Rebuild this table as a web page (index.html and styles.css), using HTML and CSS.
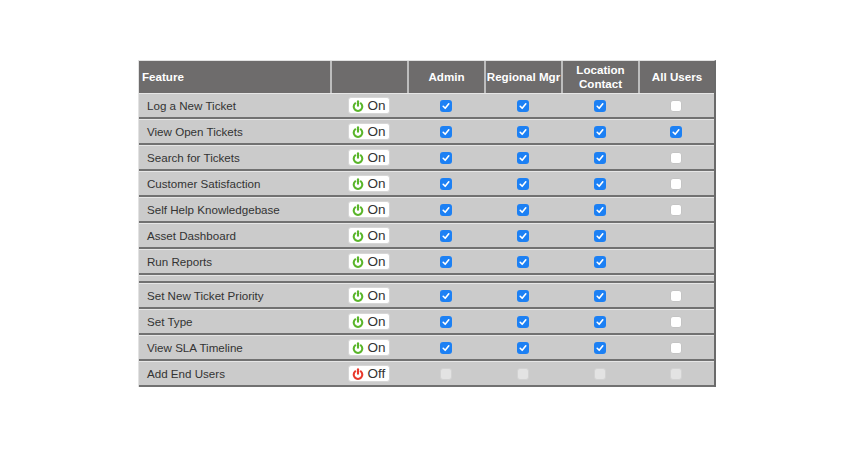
FILE: index.html
```html
<!DOCTYPE html>
<html>
<head>
<meta charset="utf-8">
<link rel="stylesheet" href="styles.css">
</head>
<body>
<table class="perm">
  <colgroup>
    <col class="c-feat"><col class="c-tog"><col class="c-role"><col class="c-role"><col class="c-role"><col class="c-last">
  </colgroup>
  <thead>
    <tr>
      <th class="th-feat"><div class="hc left">Feature</div></th>
      <th><div class="hc"></div></th>
      <th><div class="hc">Admin</div></th>
      <th><div class="hc">Regional Mgr</div></th>
      <th><div class="hc">Location<br>Contact</div></th>
      <th><div class="hc">All Users</div></th>
    </tr>
  </thead>
  <tbody id="body"></tbody>
</table>
<script src="app.js"></script>
</body>
</html>
```
FILE: app.js
```js
var rows = [
  ["Log a New Ticket", 1, "ccc", "u"],
  ["View Open Tickets", 1, "ccc", "c"],
  ["Search for Tickets", 1, "ccc", "u"],
  ["Customer Satisfaction", 1, "ccc", "u"],
  ["Self Help Knowledgebase", 1, "ccc", "u"],
  ["Asset Dashboard", 1, "ccc", ""],
  ["Run Reports", 1, "ccc", ""],
  null,
  ["Set New Ticket Priority", 1, "ccc", "u"],
  ["Set Type", 1, "ccc", "u"],
  ["View SLA Timeline", 1, "ccc", "u"],
  ["Add End Users", 0, "ddd", "d"]
];
var check = '<svg viewBox="0 0 12 12" width="12" height="12"><path d="M3.2 6.3 L5.2 8.3 L8.8 3.8" fill="none" stroke="#fff" stroke-width="1.6" stroke-linecap="round" stroke-linejoin="round"/></svg>';
function box(k) {
  if (!k) return "";
  if (k === "c") return '<span class="cb on">' + check + '</span>';
  if (k === "u") return '<span class="cb off"></span>';
  return '<span class="cb dis"></span>';
}
function power(on) {
  var c = on ? "#5ab52a" : "#e8392c";
  return '<svg class="pw" viewBox="0 0 12 12" width="12" height="12"><path d="M3.3 3.3 A4.3 4.3 0 1 0 8.7 3.3" fill="none" stroke="' + c + '" stroke-width="2.1" stroke-linecap="round"/><line x1="6" y1="1.2" x2="6" y2="5.8" stroke="' + c + '" stroke-width="2.1" stroke-linecap="round"/></svg>';
}
var html = "";
rows.forEach(function (r) {
  if (!r) { html += '<tr class="spacer"><td colspan="6"><div class="sp"></div></td></tr>'; return; }
  html += '<tr><td><div class="cell feat">' + r[0] + '</div></td>';
  html += '<td><div class="cell"><span class="tog">' + power(r[1]) + '<span class="tt">' + (r[1] ? "On" : "Off") + '</span></span></div></td>';
  for (var i = 0; i < 3; i++) html += '<td><div class="cell">' + box(r[2][i]) + '</div></td>';
  html += '<td><div class="cell">' + box(r[3]) + '</div></td></tr>';
});
document.getElementById("body").innerHTML = html;
```
FILE: styles.css
```css
html, body { margin: 0; padding: 0; background: #fff; }
body { padding: 60px 0 0 138px; font-family: "Liberation Sans", Arial, sans-serif; }
.perm {
  border-collapse: separate;
  border-spacing: 0;
  table-layout: fixed;
  width: 578px;
  box-sizing: border-box;
  border-left: 1px solid #e2e2e2;
  border-top: 1px solid #e2e2e2;
  border-right: 2px solid #6a6a6a;
}
.c-feat { width: 191px; }
.c-tog { width: 77px; }
.c-role { width: 77px; }
.c-last { width: 76px; }
th { padding: 0; background: #6e6c6c; color: #fff; font-weight: bold; font-size: 11.6px; }
th + th { border-left: 2px solid #bdbdbd; }
.hc { height: 32px; display: flex; align-items: center; justify-content: center; text-align: center; line-height: 14px; }
.hc.left { justify-content: flex-start; padding-left: 3px; }
td { padding: 0; background: #cbcbcb; border-top: 1px solid #e6e6e6; border-bottom: 2px solid #717171; }
.cell { height: 23px; display: flex; align-items: center; justify-content: center; }
.cell.feat { justify-content: flex-start; padding-left: 8px; font-size: 11.6px; color: #333; }
.sp { height: 5px; }
.tog {
  display: inline-flex; align-items: center; box-sizing: border-box;
  width: 42px; height: 17px; padding-left: 3px;
  background: #fff; border: 1px solid #d6d6d6; border-radius: 3px;
}
.pw { display: block; flex: none; }
.tt { margin-left: 4px; font-size: 13.5px; color: #333; line-height: 15px; }
.cb { display: block; width: 12px; height: 12px; box-sizing: border-box; border-radius: 3px; }
.cb svg { display: block; }
.cb.on { background: #1c80f4; }
.cb.off { background: #fff; border: 1px solid #c4c4c4; }
.cb.dis { background: #e3e3e3; border: 1px solid #d2d2d2; }
```
